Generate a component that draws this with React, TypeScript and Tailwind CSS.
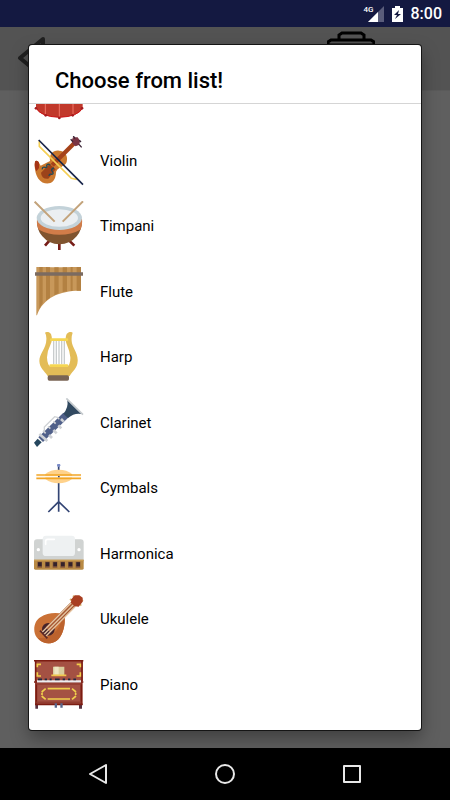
import type { ReactNode } from 'react';

type Instrument = {
  name: string;
  icon: ReactNode;
};

const DrumIcon = () => (
  <svg viewBox="27 -76 150 150" className="size-[50px] shrink-0" aria-hidden="true">
    <path d="M33 0H173V38Q160 65 103 66Q46 65 33 38Z" fill="#c1392b" />
    <path d="M33 37Q46 64 103 66Q160 64 173 37" fill="none" stroke="#cc1417" strokeWidth="3" />
    <path d="M61 0V58M103 0V64M144 0V58" stroke="#ef7567" strokeWidth="3" />
    <g fill="#a51c20">
      <circle cx="33" cy="39" r="4" />
      <circle cx="62" cy="60" r="4" />
      <circle cx="103" cy="68" r="4" />
      <circle cx="143" cy="60" r="4" />
      <circle cx="171" cy="39" r="4" />
    </g>
  </svg>
);

const ViolinIcon = () => (
  <svg viewBox="27 122 150 150" className="size-[50px] shrink-0" aria-hidden="true">
    <path d="M30 198Q38 193 42 202L47 211L75 197C72 176 85 164 102 166C120 167 130 181 125 200C120 215 101 213 94 227C91 239 93 248 84 258C73 269 51 266 40 250C32 239 27 217 30 198Z" fill="#ca782e" />
    <path d="M80 174Q99 170 119 195Q119 213 99 220Q91 225 91 240Q79 260 59 253Q49 246 49 229L72 211Q85 202 80 174Z" fill="#cd7a30" />
    <path d="M31 197Q38 194 42 202V218L34 228Q26 213 31 197Z" fill="#a63517" />
    <path d="M48 232L74 206L92 222L70 250Q49 252 48 232Z" fill="#9c431a" />
    <path d="M77 205L143 139L152 148L86 214Z" fill="#a5421a" />
    <path d="M52 222Q51 214 60 216Q68 218 65 210Q68 204 76 209M72 242Q73 234 80 237Q89 236 80 226Q79 220 87 218" fill="none" stroke="#254957" strokeWidth="4" />
    <path d="M144 126L158 126L165 136L163 148L152 153L144 147L140 136Z" fill="#793443" />
    <path d="M137 132L144 139M145 122L150 130M163 135L168 140M162 147L170 156" stroke="#3b2537" strokeWidth="4" />
    <path d="M43 137V153L139 249L153 252L156 247" fill="none" stroke="#f5cf54" strokeWidth="5" />
    <path d="M41 134L174 268" stroke="#172449" strokeWidth="5" />
  </svg>
);

const TimpaniIcon = () => (
  <svg viewBox="27 33 150 150" className="size-[50px] shrink-0" aria-hidden="true">
    <path d="M74 151L60 167M103 160V180M132 151L148 167" stroke="#771d18" strokeWidth="8" />
    <path d="M36 90Q35 121 52 139Q72 163 103 163Q135 163 155 139Q172 119 171 90Z" fill="#80542f" />
    <path d="M36 86Q34 109 42 119Q69 134 103 134Q140 134 166 119Q173 105 171 86Z" fill="#d17c49" />
    <ellipse cx="103" cy="84" rx="68" ry="36" fill="#c3d2d9" />
    <ellipse cx="103" cy="84" rx="56" ry="26" fill="#ebeff2" />
    <path d="M29 35L89 95M174 34L113 95" stroke="#c3a37b" strokeWidth="6" />
  </svg>
);

const PanFluteIcon = () => (
  <svg viewBox="27 35 150 150" className="size-[50px] shrink-0" aria-hidden="true">
    <path d="M34 33Q101 39 168 33V106C107 105 54 126 36 180H34Z" fill="#c8985a" />
    <path
      d="M43 34L53 35V143L43 161ZM63 35L75 36V127L63 136ZM88 36H101V114L88 120ZM113 36H126V108L113 110ZM137 35L143 35V106L137 107ZM155 34L168 33V106H155Z"
      fill="#b38142"
    />
    <path d="M30 56H174" stroke="#7b6b61" strokeWidth="10" />
  </svg>
);

const HarpIcon = () => (
  <svg viewBox="27 21 150 150" className="size-[50px] shrink-0" aria-hidden="true">
    <path
      d="M60 23Q71 17 78 27Q84 45 76 60Q67 77 66 97Q67 123 78 126H125Q137 119 136 97Q134 77 126 60Q118 42 125 27Q133 17 143 23Q139 33 140 48C141 68 160 84 158 109C157 130 144 137 134 153H68C58 137 44 130 43 108C43 85 64 69 64 44Q65 30 60 23Z"
      fill="#e3bc57"
    />
    <path d="M86 47V118M94 47V118M102 47V118M110 47V118M118 47V118" stroke="#c8cccd" strokeWidth="4" />
    <path d="M79 44H126M77 122H126" stroke="#f5d652" strokeWidth="8" strokeLinecap="round" />
    <rect x="68" y="151" width="64" height="16" rx="5" fill="#796454" />
  </svg>
);

const ClarinetIcon = () => (
  <svg viewBox="27 22 150 150" className="size-[50px] shrink-0" aria-hidden="true">
    <path d="M40 140L115 66L131 80L54 154Z" fill="#50608a" />
    <path d="M27 156L38 144L50 155L36 169Z" fill="#25475e" />
    <path d="M115 69Q131 51 127 28L169 70Q148 66 129 82Z" fill="#314960" />
    <path d="M124 23L174 72" stroke="#c5cacd" strokeWidth="5" />
    <path d="M58 121V109L89 78L97 80L103 86" fill="none" stroke="#cfd2d5" strokeWidth="4" />
    <path d="M43 130L67 151M72 133L81 142M85 118L95 128M100 104L109 113M108 85L116 93" stroke="#ced1d5" strokeWidth="8" />
    <path d="M54 120L62 128M69 107L76 114M85 92L92 99" stroke="#ced1d5" strokeWidth="5" />
  </svg>
);

const CymbalsIcon = () => (
  <svg viewBox="27 24 150 150" className="size-[50px] shrink-0" aria-hidden="true">
    <path d="M101 27V167M70 168L101 137L133 168" fill="none" stroke="#334574" strokeWidth="5" />
    <path d="M61 54Q76 41 101 41Q126 41 141 54V69Q124 82 101 82Q78 82 61 69Z" fill="#ffd28b" />
    <path d="M34 62H168" stroke="#fff6e7" strokeWidth="5" />
    <path d="M34 57H168M34 67H168" stroke="#f2a526" strokeWidth="5" />
    <path d="M99 62H104" stroke="#334574" strokeWidth="4" />
    <circle cx="101" cy="28" r="5" fill="#7b8cc8" />
  </svg>
);

const HarmonicaIcon = () => (
  <svg viewBox="27 25 150 150" className="size-[50px] shrink-0" aria-hidden="true">
    <rect x="27" y="56" width="149" height="76" rx="9" fill="#d0d3d2" />
    <path d="M27 117H176V143Q176 147 172 147H31Q27 147 27 143Z" fill="#b88a45" />
    <path d="M27 119H176" stroke="#c99b50" strokeWidth="4" />
    <rect x="53" y="45" width="97" height="61" rx="10" fill="#eef1f2" />
    <path d="M62 71V61Q62 56 68 56H88" fill="none" stroke="#fff" strokeWidth="5" strokeLinecap="round" />
    <circle cx="40" cy="87" r="5" fill="#fff" />
    <circle cx="162" cy="87" r="5" fill="#fff" />
    <path d="M37 132H51M60 132H74M83 132H97M106 132H120M129 132H143M152 132H166" stroke="#82553b" strokeWidth="18" />
    <path d="M39 131H50M62 131H73M85 131H96M108 131H119M131 131H142M154 131H165" stroke="#33222a" strokeWidth="12" />
  </svg>
);

const UkuleleIcon = () => (
  <svg viewBox="27 26 150 150" className="size-[50px] shrink-0" aria-hidden="true">
    <path d="M118 83C123 113 114 150 94 164C75 177 49 172 35 153C22 134 27 105 46 93C67 79 91 78 118 83Z" fill="#ca7136" />
    <path d="M112 85L118 83C123 112 114 149 94 164C75 177 50 171 38 155C78 159 109 130 112 85Z" fill="#bc622d" />
    <circle cx="70" cy="129" r="19" fill="#45232a" />
    <path d="M62 123L140 45L153 58L75 137Z" fill="#a85a34" />
    <path d="M49 140L139 49M55 146L145 55M61 151L150 61" stroke="#e4c4a1" strokeWidth="4" />
    <path d="M45 133L67 156" stroke="#5c2725" strokeWidth="5" />
    <path d="M135 38L143 45M144 28L150 35M162 51L169 58M167 39L174 44" stroke="#d9b875" strokeWidth="5" />
    <path d="M139 39L149 27H163L173 34V46L161 61L149 60L138 49Z" fill="#a93f22" />
  </svg>
);

const PianoIcon = () => (
  <svg viewBox="27 28 150 150" className="size-[50px] shrink-0" aria-hidden="true">
    <path d="M31 158H39V174H31ZM162 158H171V174H162Z" fill="#553140" />
    <rect x="30" y="29" width="143" height="134" fill="#a45143" />
    <path d="M27 30H175M27 94H175M30 161H173M32 31V91M171 31V91M34 98V160M169 98V160" stroke="#7b1c12" strokeWidth="5" />
    <path d="M34 100H169M34 155H169" stroke="#923c31" strokeWidth="5" />
    <path d="M36 92H168" stroke="#eceef1" strokeWidth="7" />
    <path d="M39 86H51M59 86H66M74 86H80M90 86H104M113 86H120M129 86H136M145 86H153" stroke="#202a41" strokeWidth="5" />
    <path d="M37 50V41H48M155 41H166V50M37 65V76H48M155 76H166V65" fill="none" stroke="#f2ce49" strokeWidth="5" />
    <path d="M84 48H118V73H84Z" fill="#d9ce9d" />
    <path d="M88 48H101V72H88Z" fill="#eee6c2" />
    <path d="M79 74H124" stroke="#f0c64b" strokeWidth="5" />
    <path d="M68 114H135M68 145H135M62 114L50 124M50 136L62 146M141 114L153 124M153 136L141 146M51 126V133M152 126V133" fill="none" stroke="#f0d04c" strokeWidth="5" />
    <path d="M89 158H96V171H89ZM106 158H113V171H106Z" fill="#58678c" />
  </svg>
);

const instruments: Instrument[] = [
  { name: 'Violin', icon: <ViolinIcon /> },
  { name: 'Timpani', icon: <TimpaniIcon /> },
  { name: 'Flute', icon: <PanFluteIcon /> },
  { name: 'Harp', icon: <HarpIcon /> },
  { name: 'Clarinet', icon: <ClarinetIcon /> },
  { name: 'Cymbals', icon: <CymbalsIcon /> },
  { name: 'Harmonica', icon: <HarmonicaIcon /> },
  { name: 'Ukulele', icon: <UkuleleIcon /> },
  { name: 'Piano', icon: <PianoIcon /> },
];

const StatusBar = () => (
  <header className="flex h-[27px] shrink-0 items-center justify-end bg-[#141941] pr-2 text-white">
    <div className="relative mr-2 flex h-4 w-5 items-end justify-end">
      <span className="absolute top-0 left-0 text-[8px] leading-2 font-medium">4G</span>
      <svg viewBox="0 0 16 16" className="size-4" aria-hidden="true">
        <path d="M16 0V16H0Z" fill="#5a5d7b" />
        <path d="M10 6V16H0Z" fill="#fff" />
      </svg>
    </div>
    <svg viewBox="0 0 11 16" className="mr-2 h-4 w-[11px]" aria-hidden="true">
      <path d="M3 0H8V2H11V16H0V2H3Z" fill="#fff" />
      <path d="M7 4L2 9H5L3 13L9 8H6Z" fill="#141941" />
    </svg>
    <span className="text-base leading-5 font-medium">8:00</span>
  </header>
);

const AppBar = () => (
  <div className="flex h-16 items-start justify-between border-b border-[#5a5a5a] bg-[#535353] pr-[75px] pl-[17px]">
    <button type="button" aria-label="Back" className="pt-[10px]">
      <svg viewBox="0 0 30 42" className="h-[42px] w-[30px]" fill="none" stroke="#202020" strokeWidth="4">
        <path d="M26 2L3 21L26 40Z" strokeLinejoin="round" />
      </svg>
    </button>
    <button type="button" aria-label="Delete" className="pt-1">
      <svg viewBox="0 0 48 48" className="size-12" fill="none" stroke="#000" strokeWidth="3">
        <path d="M12 8V4L15 2H34L37 4V8M1 14V11L4 9H44L47 11V14H1M5 14V46H43V14" />
      </svg>
    </button>
  </div>
);

const InstrumentDialog = () => (
  <div
    role="dialog"
    aria-modal="true"
    aria-labelledby="dialog-title"
    className="absolute inset-x-[29px] top-[18px] bottom-[18px] flex flex-col overflow-hidden rounded-[3px] bg-white shadow-[0_0_0_1px_#151515,0_8px_18px_rgba(0,0,0,0.35)]"
  >
    <h1 id="dialog-title" className="border-b border-[#d5d5d5] pt-[21px] pb-[7px] pl-[26px] text-[22px] leading-[30px] font-medium">
      Choose from list!
    </h1>
    <ul className="flex min-h-0 flex-1 flex-col overflow-hidden pb-3">
      <li className="mb-2 flex h-4 shrink-0 items-end overflow-hidden pl-[5px]">
        <button type="button" aria-label="Drum">
          <DrumIcon />
        </button>
      </li>
      {instruments.map((instrument) => (
        <li key={instrument.name} className="flex min-h-0 flex-1">
          <button type="button" className="flex w-full items-center gap-4 pl-[5px] text-left text-[15px]">
            {instrument.icon}
            <span>{instrument.name}</span>
          </button>
        </li>
      ))}
    </ul>
  </div>
);

const NavigationBar = () => (
  <nav className="flex h-[52px] shrink-0 items-center justify-center gap-[107px] bg-black">
    <button type="button" aria-label="Back">
      <svg viewBox="0 0 20 20" className="size-5" fill="none" stroke="#e8e8e8" strokeWidth="2" strokeLinejoin="round">
        <path d="M18 1V19L2 10Z" />
      </svg>
    </button>
    <button type="button" aria-label="Home">
      <svg viewBox="0 0 20 20" className="size-5" fill="none" stroke="#e8e8e8" strokeWidth="2">
        <circle cx="10" cy="10" r="9" />
      </svg>
    </button>
    <button type="button" aria-label="Recent apps">
      <svg viewBox="0 0 20 20" className="size-5" fill="none" stroke="#e8e8e8" strokeWidth="2" strokeLinejoin="round">
        <rect x="2" y="2" width="16" height="16" />
      </svg>
    </button>
  </nav>
);

const App = () => {
  return (
    <div className="flex h-screen flex-col overflow-hidden font-[Roboto,sans-serif] text-black">
      <StatusBar />
      <main className="relative min-h-0 flex-1 bg-[#5f5f5f]">
        <AppBar />
        <InstrumentDialog />
      </main>
      <NavigationBar />
    </div>
  );
};

export default App;
